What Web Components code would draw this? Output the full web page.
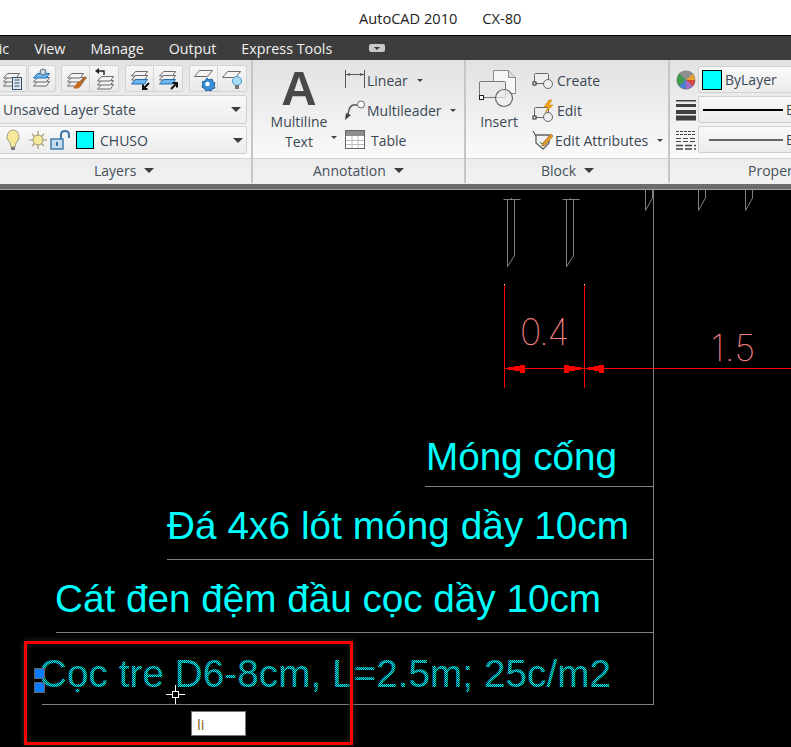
<!DOCTYPE html>
<html>
<head>
<meta charset="utf-8">
<style>
  html, body { margin: 0; height: 747px; overflow: hidden; background: #000; }
</style>
</head>
<body>
<autocad-app></autocad-app>
<script>
const stackGray = `<g fill="#f2f2f2" stroke="#6b6b6b"><path d="M6.5 13.5h12l-3 4.5h-13z"/><path d="M6.5 9.5h12l-3 4.5h-13z"/><path d="M6.5 5.5h12l-3 4.5h-13z"/></g>`
const stackBlue = `<g stroke="#6b6b6b" fill="#f2f2f2"><path d="M6.5 3.5h12l-3 4.5h-13z"/><path d="M6.5 7.5h12l-3 4.5h-13z"/></g><path d="M6.5 11.5h12l-3 4.5h-13z" fill="#6db5ec" stroke="#1f6fb5"/>`
const gear = `<path d="M14 10l2 2 3-1 1 3 2 1-1 3 1 2-3 1-1 2-3-1-2 1-2-3-2-1 1-3-1-2 3-1z" fill="#3b8fd8" stroke="#1b5f9e"/><circle cx="14.5" cy="16" r="2.2" fill="#fff"/>`

const ICONS = {
  layerCalc: `${stackGray}<rect x="11.5" y="9.5" width="9" height="12" fill="#dde6ee" stroke="#34506b"/><path d="M13.5 12h5M13.5 15h5M13.5 18h5" stroke="#34506b"/>`,
  layerMan: `${stackGray.replace('M6.5 5.5h12l-3 4.5h-13z"', 'M6.5 5.5h12l-3 4.5h-13z" style="fill:#6db5ec;stroke:#1f6fb5"')}<circle cx="12" cy="4" r="3" fill="#c9d6e0" stroke="#5a6b7a"/>`,
  layerBrush: `${stackGray}<path d="M20 8l2 2-6 6-2-2z" fill="#a9692c"/><path d="M14 13l3 3-3 4q-3 1-6 0 3-2 3-4z" fill="#c8691b"/>`,
  layerBack: `<g transform="translate(2 3)">${stackGray}</g><path d="M5 3h6v4" fill="none" stroke="#222" stroke-width="1.4"/><path d="M2 3l4-3v6z" fill="#222"/>`,
  layerDown: `${stackBlue}<path d="M20 15l-6 6M14 16.5V21h4.5" fill="none" stroke="#111" stroke-width="2"/>`,
  layerUp: `${stackBlue}<path d="M14 21l6-6M15.500 15H20v4.500" fill="none" stroke="#111" stroke-width="2"/>`,
  planeGear: `<path d="M6.500 2.500h13l-5 6h-13z" fill="#f5f5f5" stroke="#6b6b6b"/>${gear}`,
  planeBulb: `<path d="M6.500 3.500h13l-5 6h-13z" fill="#f5f5f5" stroke="#6b6b6b"/><circle cx="16" cy="13" r="4.500" fill="#a8dcf5" stroke="#4a9ad0"/><rect x="14" y="17" width="4" height="4" fill="#777"/>`,
  bulb: `<path d="M5 17q0-3-2-5.500Q.5 9 1 6 2.500 0 7 0t6 6q.5 3-2 5.500Q9 14 9 17z" fill="#f8e89a" stroke="#9a9a80"/><rect x="5" y="17" width="4" height="3" fill="#777"/>`,
  sun: `<g stroke="#a09a70" stroke-width="1.200"><path d="M9 0v18M0 9h18M3 3l12 12M15 3L3 15"/></g><circle cx="9" cy="9" r="5" fill="#f4ea9e" stroke="#a09a70"/>`,
  lock: `<rect x="1" y="9" width="12" height="10" fill="#c7dcec" stroke="#3a76a8" stroke-width="1.400"/><path d="M11 9V5q0-4 4-4t4 4v3" fill="none" stroke="#3a76a8" stroke-width="2"/><rect x="6" y="12" width="2" height="4" fill="#3a76a8"/>`,
  linear: `<path d="M.5 0v18M19.500 0v18M1 4.500h18" stroke="#555" fill="none"/><path d="M1 4.500l4-1.500v3zM19 4.500l-4-1.500v3z" fill="#555"/>`,
  leader: `<path d="M2 18l2-8q1-4 4-5h6" fill="none" stroke="#555" stroke-width="1.400"/><path d="M0 20l1-7 5 2z" fill="#444"/><circle cx="16" cy="4.500" r="3.500" fill="#fff" stroke="#666"/>`,
  table: `<rect x=".5" y=".5" width="19" height="18" fill="#fff" stroke="#666"/><rect x="1" y="1" width="18" height="5" fill="#8e8e8e"/><path d="M1 10.500h18M1 14.500h18M7 6v12M13 6v12" stroke="#bbb"/>`,
  insert: `<path d="M16.500 2.500h15l7 7v16h-22z" fill="#f7f7f7" stroke="#8a8a8a"/><path d="M31.500 2.500v7h7" fill="#ddd" stroke="#8a8a8a"/><rect x="2.500" y="13.500" width="26" height="16" rx="1" fill="#e8e8e8" stroke="#777"/><circle cx="27" cy="30" r="8.500" fill="#f0f0f0" fill-opacity=".7" stroke="#666" stroke-width="1.200"/><rect x="2.500" y="27.500" width="4" height="4" fill="#fff" stroke="#222"/>`,
  create: `<rect x="2.500" y="3.500" width="14" height="10" rx="1" fill="#eee" stroke="#666"/><circle cx="16" cy="14" r="4.500" fill="#eee" stroke="#666"/><rect x="1" y="12" width="3" height="3" fill="#fff" stroke="#222"/>`,
  edit: `<rect x="2.500" y="7.500" width="14" height="10" rx="1" fill="#eee" stroke="#666"/><circle cx="16" cy="17" r="4.500" fill="#eee" stroke="#666"/><rect x="1" y="16" width="3" height="3" fill="#fff" stroke="#222"/><path d="M17 0l-5 7h4l-3 6 8-8h-4l3-5z" fill="#f2a31c" stroke="#c9780c" stroke-width=".5"/>`,
  attr: `<path d="M1 1l3 5" stroke="#333"/><path d="M4 5h13v8l-6 6-7-6z" fill="#f2f2f2" stroke="#666" stroke-width="1.400"/><path d="M8 12l2 2 5-5" fill="none" stroke="#4a7a4a"/><path d="M11 13l8-9 2 2-8 9-3 1z" fill="#e8a02a" stroke="#9a5a10" stroke-width=".7"/>`,
  wheel: `<circle cx="10" cy="10" r="9.500" fill="#777"/><path d="M10 10L3 4q3-3 7-3t7 3z" fill="#8f8f8f"/><path d="M10 10L3 4q-2 3-2 6t2 6z" fill="#3e9e4a"/><path d="M10 10l7-6q2 3 2 6z" fill="#e6a22e"/><path d="M10 10h9q0 3-2 6z" fill="#d8453c"/><path d="M10 10l7 6q-3 3-7 3z" fill="#a36ac2"/><path d="M10 10v9q-4 0-7-3z" fill="#4a7fd0"/>`,
  weights: `<g fill="#3f3f3f"><rect y="0" width="20" height="1.500"/><rect y="4" width="20" height="3"/><rect y="10" width="20" height="4"/><rect y="15.500" width="20" height="5"/></g>`,
  types: `<g stroke="#444" stroke-dasharray="3 1"><path d="M0 1.500h20M0 4.500h20"/></g><g stroke="#444" stroke-dasharray="5 2"><path d="M0 8.500h20M0 11.500h20"/></g><g stroke="#444" stroke-dasharray="7 2" stroke-width="1.500"><path d="M0 15.500h20M0 19h20"/></g>`
}

class CadIcon extends HTMLElement {
    constructor() {
        super();
        this.attachShadow({ mode: "open" });
        const w = this.getAttribute("w") || 22
        const h = this.getAttribute("h") || w
        this.shadowRoot.innerHTML = `
        <style>
        :host { display: block; width: ${w}px; height: ${h}px; flex: none; }
        svg { display: block; overflow: visible; }
        </style>
        <svg width="${w}" height="${h}" viewBox="0 0 ${w} ${h}">${ICONS[this.getAttribute("name")]}</svg>`
    }
}
customElements.define("cad-icon", CadIcon);

class DownArrow extends HTMLElement {
    constructor() {
        super();
        this.attachShadow({ mode: "open" });
        const big = this.hasAttribute("big")
        this.shadowRoot.innerHTML = `
        <style>
        :host { display: block; flex: none; width: 0; height: 0;
          border-style: solid; border-color: ${big ? "#3c3c3c" : "#444"} transparent transparent transparent;
          border-width: ${big ? "5px 5px 0 5px" : "3px 3px 0 3px"}; }
        </style>`
    }
}
customElements.define("down-arrow", DownArrow);

class RibbonPanel extends HTMLElement {
    constructor() {
        super();
        this.attachShadow({ mode: "open" });
        this.shadowRoot.innerHTML = `
        <style>
        :host { display: flex; flex-direction: column; flex: none; box-sizing: border-box; height: 123px;
          border-right: 2px solid #c6c6c6; }
        .body { height: 98px; box-sizing: border-box; overflow: hidden;
          background: linear-gradient(#e2e2e2, #fafafa); }
        footer { flex: 1; display: flex; align-items: center; gap: 8px; box-sizing: border-box;
          border-top: 1px solid #d2d2d2; background: linear-gradient(#ececec, #f2f2f2);
          padding: 0 0 2px var(--foot-left, 0); color: #454f5a; white-space: nowrap; overflow: hidden; }
        </style>
        <div class="body"><slot></slot></div>
        <footer>${this.getAttribute("label")}${this.hasAttribute("noarrow") ? "" : "<down-arrow big></down-arrow>"}</footer>`
    }
}
customElements.define("ribbon-panel", RibbonPanel);

class ComboBox extends HTMLElement {
    constructor() {
        super();
        this.attachShadow({ mode: "open" });
        this.shadowRoot.innerHTML = `
        <style>
        :host { display: flex; align-items: center; box-sizing: border-box; border: 1px solid #d0d0d0;
          border-radius: 2px; background: linear-gradient(#f9f9f9, #ececec); overflow: hidden; }
        </style>
        <slot></slot>`
    }
}
customElements.define("combo-box", ComboBox);

class ToolRow extends HTMLElement {
    constructor() {
        super();
        this.attachShadow({ mode: "open" });
        const pad = this.getAttribute("pad") || 2
        const arrow = this.getAttribute("arrow")
        this.shadowRoot.innerHTML = `
        <style>
        :host { display: flex; align-items: center; height: 30px; color: #3a4754; white-space: nowrap; }
        .lbl { margin-left: ${pad}px; }
        down-arrow { margin-left: ${arrow}px; }
        </style>
        <cad-icon name="${this.getAttribute("icon")}" w="20"></cad-icon>
        <span class="lbl">${this.getAttribute("label")}</span>
        ${arrow ? "<down-arrow></down-arrow>" : ""}`
    }
}
customElements.define("tool-row", ToolRow);

class LayersPanel extends HTMLElement {
    constructor() {
        super();
        this.attachShadow({ mode: "open" });
        this.shadowRoot.innerHTML = `
        <style>
        :host { display: block; }
        ribbon-panel { width: 253px; --foot-left: 94px; }
        .wrap { display: flex; flex-direction: column; gap: 2px; padding: 5px 4px 0 0; }
        .tools { display: flex; justify-content: flex-end; margin-bottom: 1px; }
        .grp { display: flex; height: 27px; box-sizing: border-box; border: 1px solid #d4d4d4; border-radius: 2px;
          background: linear-gradient(#f6f6f6, #e9e9e9); margin-left: 5px; }
        .grp span { display: flex; align-items: center; justify-content: center; width: 27px; }
        .grp span + span { border-left: 1px solid #d4d4d4; width: 28px; }
        combo-box { color: #3a4754; margin-left: -2px; }
        .state { height: 29px; padding: 0 5px 0 4px; }
        .layer { height: 28px; padding: 0 3px 0 4px; }
        .state, .layer { display: flex; }
        .bulb { margin-left: 3px; }
        .sun { margin-left: 9px; }
        .lock { margin-left: 3px; }
        .swatch { width: 16px; height: 16px; background: #00ffff; border: 1px solid #000; margin-left: 6px; }
        .name { margin-left: 6px; flex: 1; }
        </style>
        <ribbon-panel label="Layers">
          <div class="wrap">
            <div class="tools">
              <div class="grp" style="margin-left:0"><span style="width:28px"><cad-icon name="layerCalc"></cad-icon></span></div>
              <div class="grp" style="margin-left:1px"><span style="width:26px"><cad-icon name="layerMan"></cad-icon></span></div>
              <div class="grp"><span><cad-icon name="layerBrush"></cad-icon></span><span><cad-icon name="layerBack"></cad-icon></span></div>
              <div class="grp" style="margin-left:6px"><span><cad-icon name="layerDown"></cad-icon></span><span><cad-icon name="layerUp"></cad-icon></span></div>
              <div class="grp" style="margin-left:6px"><span><cad-icon name="planeGear"></cad-icon></span><span><cad-icon name="planeBulb"></cad-icon></span></div>
            </div>
            <combo-box class="state"><span>Unsaved Layer State</span><down-arrow big style="margin-left:auto"></down-arrow></combo-box>
            <combo-box class="layer">
              <cad-icon class="bulb" name="bulb" w="14" h="20"></cad-icon>
              <cad-icon class="sun" name="sun" w="18" h="18"></cad-icon>
              <cad-icon class="lock" name="lock" w="20" h="20"></cad-icon>
              <div class="swatch"></div>
              <span class="name">CHUSO</span>
              <down-arrow big></down-arrow>
            </combo-box>
          </div>
        </ribbon-panel>`
    }
}
customElements.define("layers-panel", LayersPanel);

class AnnotationPanel extends HTMLElement {
    constructor() {
        super();
        this.attachShadow({ mode: "open" });
        this.shadowRoot.innerHTML = `
        <style>
        :host { display: block; }
        ribbon-panel { width: 213px; --foot-left: 60px; }
        .wrap { display: flex; padding: 5px 0 0 0; }
        .big { width: 92px; position: relative; display: flex; flex-direction: column; align-items: center; color: #3a4754; text-align: center; line-height: 20px; }
        .big .a { font: bold 49px/47px "Liberation Sans", sans-serif; color: #484848; height: 47px; }
        .big down-arrow { position: absolute; left: 78px; top: 71px; }
        .col { display: flex; flex-direction: column; }
        </style>
        <ribbon-panel label="Annotation">
          <div class="wrap">
            <div class="big"><div class="a">A</div><div>Multiline<br>Text</div><down-arrow></down-arrow></div>
            <div class="col">
              <tool-row icon="linear" label="Linear" arrow="9"></tool-row>
              <tool-row icon="leader" label="Multileader" arrow="8"></tool-row>
              <tool-row icon="table" label="Table" pad="6"></tool-row>
            </div>
          </div>
        </ribbon-panel>`
    }
}
customElements.define("annotation-panel", AnnotationPanel);

class BlockPanel extends HTMLElement {
    constructor() {
        super();
        this.attachShadow({ mode: "open" });
        this.shadowRoot.innerHTML = `
        <style>
        :host { display: block; }
        ribbon-panel { width: 204px; --foot-left: 75px; }
        .wrap { display: flex; padding: 5px 0 0 0; }
        .big { width: 66px; display: flex; flex-direction: column; align-items: center; color: #3a4754; padding-top: 3px; }
        .big span { margin-top: 4px; }
        .col { display: flex; flex-direction: column; }
        </style>
        <ribbon-panel label="Block">
          <div class="wrap">
            <div class="big"><cad-icon name="insert" w="44" h="40"></cad-icon><span>Insert</span></div>
            <div class="col">
              <tool-row icon="create" label="Create" pad="5"></tool-row>
              <tool-row icon="edit" label="Edit" pad="5"></tool-row>
              <tool-row icon="attr" label="Edit Attributes" pad="3" arrow="9"></tool-row>
            </div>
          </div>
        </ribbon-panel>`
    }
}
customElements.define("block-panel", BlockPanel);

class PropsPanel extends HTMLElement {
    constructor() {
        super();
        this.attachShadow({ mode: "open" });
        this.shadowRoot.innerHTML = `
        <style>
        :host { display: block; }
        ribbon-panel { width: 200px; --foot-left: 78px; border-right: 0; }
        .wrap { display: grid; grid-template-columns: 20px 1fr; column-gap: 2px; row-gap: 3px; padding: 6px 0 0 6px; align-items: center; }
        combo-box { color: #3a4754; height: 27px; padding-left: 3px; white-space: nowrap; }
        .swatch { width: 18px; height: 18px; background: #00ffff; border: 1px solid #000; margin-right: 3px; flex: none; }
        .line { height: 2px; background: #000; margin-right: 3px; flex: none; width: 80px; margin-left: 1px; }
        .thin { height: 2px; background: #666; width: 74px; margin-left: 7px; }
        </style>
        <ribbon-panel label="Properties" noarrow>
          <div class="wrap">
            <cad-icon name="wheel" w="20"></cad-icon>
            <combo-box><div class="swatch"></div>ByLayer</combo-box>
            <cad-icon name="weights" w="20"></cad-icon>
            <combo-box><div class="line"></div>ByLayer</combo-box>
            <cad-icon name="types" w="20"></cad-icon>
            <combo-box><div class="line thin"></div>ByLayer</combo-box>
          </div>
        </ribbon-panel>`
    }
}
customElements.define("props-panel", PropsPanel);

class CadDrawing extends HTMLElement {
    constructor() {
        super();
        this.attachShadow({ mode: "open" });
        this.shadowRoot.innerHTML = this.getTemplate()
    }

    pile(x1, x2) {
        return `<path d="M${x1 - 4} 199.5H${x2 + 6}M${x1 + 4} 198v2"/>` +
          `<path d="M${x1} 199V266.700M${x2} 199V255.700L${x1} 266.700"/>`
    }

    stub(x1, x2) {
        return `<path d="M${x1} 190V210.500M${x2} 190V198L${x1} 210.500"/>`
    }

    getTemplate() {
        return `
        <style>
        :host { display: block; position: relative; height: 557px; background: #000; overflow: hidden; }
        svg { display: block; }
        text { font-family: "Liberation Sans", Arial, sans-serif; }
        .cy { fill: #00ffff; font-size: 38.700px; }
        .dim { fill: #ff9090; stroke: #ff8a8a; stroke-width: .25; font-family: Inter, Roboto, sans-serif; font-weight: 100; font-size: 36px; }
        .mark { position: absolute; left: 24px; top: 451px; width: 323px; height: 98px;
          border: 3px solid #ff0000; box-shadow: 0 0 6px #333, inset 0 0 6px #222; }
        .dyn { position: absolute; left: 191px; top: 521px; width: 53px; height: 23px; background: #fff;
          border: 1px solid #777; font: 15px/24px "Open Sans", sans-serif; color: #8a6420; text-indent: 5px; }
        </style>
        <svg width="791" height="557" viewBox="0 190 791 557">
          <defs>
            <pattern id="dither" width="2" height="2" patternUnits="userSpaceOnUse">
              <rect width="2" height="2" fill="#004c4c"/>
              <rect x="0" y="0" width="1" height="1" fill="#00ffff"/>
              <rect x="1" y="1" width="1" height="1" fill="#00ffff"/>
            </pattern>
          </defs>
          <g fill="none" stroke="#808080">
            ${this.pile(507.5, 514.5)}
            ${this.pile(566.5, 573.5)}
            ${this.stub(645.5, 652.5)}
            ${this.stub(698.5, 705.5)}
            ${this.stub(745.5, 752.5)}
            <path d="M653.500 190V704.500" shape-rendering="crispEdges"/>
            <path d="M425 486.500H653M167 559.500H653M56 632.500H653M42 704.500H653" shape-rendering="crispEdges"/>
          </g>
          <g shape-rendering="crispEdges">
            <path d="M504.500 284V388M584.500 284V388M504 368.500H791" stroke="#ff0000" fill="none"/>
            <rect x="504" y="284" width="1" height="1" fill="#fff"/>
            <rect x="584" y="284" width="1" height="1" fill="#fff"/>
            <path d="M508 367h6v-1h6v-1.500h5v8h-5V371h-6v-1h-6z" fill="#ff0000"/>
            <path d="M581 367h-6v-1h-6v-1.500h-5v8h5V371h6v-1h6z" fill="#ff0000"/>
            <path d="M588 367h6v-1h5v-1.500h5v8h-5V371h-5v-1h-6z" fill="#ff0000"/>
          </g>
          <text class="dim" x="520" y="345" textLength="49">0.4</text>
          <text class="dim" x="711" y="361" textLength="44">1.5</text>
          <text class="cy" x="426" y="470" textLength="191">Móng cống</text>
          <text class="cy" x="167" y="539" textLength="462">Đá 4x6 lót móng dầy 10cm</text>
          <text class="cy" x="55" y="612" textLength="546">Cát đen đệm đầu cọc dầy 10cm</text>
          <text class="cy" x="39" y="687" textLength="572" style="fill:url(#dither)">Cọc tre D6-8cm, L=2.5m; 25c/m2</text>
          <g fill="#0a7cff" stroke="#666" shape-rendering="crispEdges">
            <rect x="34.500" y="668.500" width="10" height="10"/>
            <rect x="34.500" y="682.500" width="10" height="10"/>
          </g>
          <g stroke="#fff" fill="none" shape-rendering="crispEdges">
            <path d="M166 694.500H172M179 694.500H185M175.500 685V691M175.500 698V704"/>
            <rect x="172.500" y="691.500" width="6" height="6"/>
          </g>
        </svg>
        <div class="mark"></div>
        <div class="dyn">li</div>`
    }
}
customElements.define("cad-drawing", CadDrawing);

class AutocadApp extends HTMLElement {
    constructor() {
        super();
        this.attachShadow({ mode: "open" });
        this.shadowRoot.innerHTML = `
        <style>
        :host { display: block; width: 791px; height: 747px; overflow: hidden;
          font: 14px "Open Sans", "Noto Sans", sans-serif; }
        .title { height: 35px; background: #fff; display: flex; align-items: center; color: #222; font-size: 14.600px; }
        .title span:first-child { margin-left: 359px; }
        .title span + span { margin-left: 25px; }
        .tabs { height: 24px; border-top: 1px solid #000; background: #3d3d3d; color: #f0f0f0; font-size: 14.300px;
          display: flex; align-items: center; gap: 25px; }
        .tabs span:first-child { margin-left: -43px; }
        .pop { width: 16px; height: 8px; border-radius: 2px; background: #c8c8c8; margin-left: 12px; display: flex; align-items: center; justify-content: center; }
        .pop i { border: solid transparent; border-top-color: #333; border-width: 3px 3px 0; }
        .ribbon { display: flex; width: 791px; overflow: hidden; }
        .strip { height: 7px; box-sizing: border-box; background: #6c6c6c; border-top: 1px solid #ededed; border-bottom: 1px solid #a0a0a0; }
        </style>
        <div class="title"><span>AutoCAD 2010</span><span>CX-80</span></div>
        <div class="tabs"><span>Graphic</span><span>View</span><span>Manage</span><span>Output</span><span>Express Tools</span><div class="pop"><i></i></div></div>
        <div class="ribbon">
          <layers-panel></layers-panel>
          <annotation-panel></annotation-panel>
          <block-panel></block-panel>
          <props-panel></props-panel>
        </div>
        <div class="strip"></div>
        <cad-drawing></cad-drawing>`
    }
}
customElements.define("autocad-app", AutocadApp);
</script>
</body>
</html>
